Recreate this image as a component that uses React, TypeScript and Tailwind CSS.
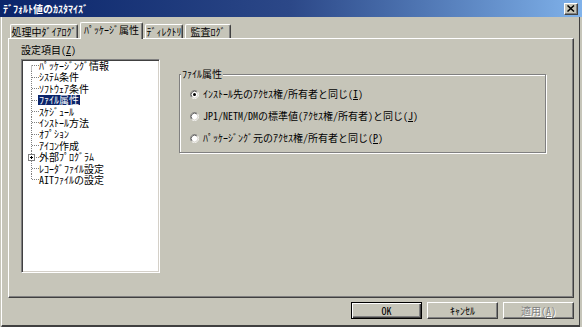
import React from 'react';

const FONT = "font-['Noto_Sans_CJK_JP','Noto_Sans_CJK_SC',sans-serif] [font-feature-settings:'hwid']";

type TreeItem = { label: string; h: number; selected?: boolean; expandable?: boolean };

// rows sit ~11.4px apart, so heights alternate 11 / 12
const treeItems: TreeItem[] = [
  { label: 'ﾊﾟｯｹｰｼﾞﾝｸﾞ情報', h: 11 },
  { label: 'ｼｽﾃﾑ条件', h: 12 },
  { label: 'ｿﾌﾄｳｪｱ条件', h: 11 },
  { label: 'ﾌｧｲﾙ属性', h: 12, selected: true },
  { label: 'ｽｹｼﾞｭｰﾙ', h: 11 },
  { label: 'ｲﾝｽﾄｰﾙ方法', h: 11 },
  { label: 'ｵﾌﾟｼｮﾝ', h: 12 },
  { label: 'ｱｲｺﾝ作成', h: 11 },
  { label: '外部ﾌﾟﾛｸﾞﾗﾑ', h: 12, expandable: true },
  { label: 'ﾚｺｰﾀﾞﾌｧｲﾙ設定', h: 11 },
  { label: 'AITﾌｧｲﾙの設定', h: 11 },
];

const Connector: React.FC<{ h: number; first: boolean; last: boolean; plus?: boolean }> = ({
  h,
  first,
  last,
  plus,
}) => {
  const mid = Math.floor(h / 2) + 0.5;
  return (
    <svg width={16} height={h} viewBox={`0 0 16 ${h}`} className="shrink-0">
      <line x1={8.5} y1={first ? mid : 0} x2={8.5} y2={last ? mid : h} stroke="#808080" strokeDasharray="1 1" />
      <line x1={9} y1={mid} x2={16} y2={mid} stroke="#808080" strokeDasharray="1 1" />
      {plus && (
        <>
          <rect x={5.5} y={mid - 3} width={6} height={6} fill="#fff" stroke="#808080" />
          <line x1={7} y1={mid} x2={10} y2={mid} stroke="#000" />
          <line x1={8.5} y1={mid - 1.5} x2={8.5} y2={mid + 1.5} stroke="#000" />
        </>
      )}
    </svg>
  );
};

const Radio: React.FC<{ checked?: boolean }> = ({ checked }) => (
  <svg width={9} height={9} viewBox="0 0 12 12" className="shrink-0">
    <circle cx={6} cy={6} r={4.5} fill="#fff" />
    <path d="M2.11 9.89 A5.5 5.5 0 0 1 9.89 2.11" fill="none" stroke="#808080" />
    <path d="M9.89 2.11 A5.5 5.5 0 0 1 2.11 9.89" fill="none" stroke="#fff" />
    <path d="M2.82 9.18 A4.5 4.5 0 0 1 9.18 2.82" fill="none" stroke="#404040" />
    <path d="M9.18 2.82 A4.5 4.5 0 0 1 2.82 9.18" fill="none" stroke="#d4d0c8" />
    {checked && <circle cx={6} cy={6} r={2} fill="#000" />}
  </svg>
);

const Tab: React.FC<{ className: string; selected?: boolean; children: React.ReactNode }> = ({
  className,
  selected,
  children,
}) => (
  <div
    className={`${className} ${
      selected ? 'h-[17px] -mb-[1px] relative z-10 pb-[2px]' : 'h-[14px] pt-[1px]'
    } bg-[#c6c5b9] border-l border-t border-r border-white border-r-[#404040] shadow-[inset_-1px_0_0_#808080] rounded-t-[2px] flex items-center justify-center text-[10px] leading-[12px] whitespace-nowrap`}
  >
    {children}
  </div>
);

const RadioRow: React.FC<{ checked?: boolean; children: React.ReactNode }> = ({ checked, children }) => (
  <div className="h-[22px] flex items-center gap-[4px] text-[10px] leading-[12px] whitespace-nowrap">
    <Radio checked={checked} />
    <span>{children}</span>
  </div>
);

const raised =
  'bg-[#c6c5b9] border border-t-white border-l-white border-r-[#404040] border-b-[#404040] shadow-[inset_-1px_-1px_0_#808080]';

export default function App() {
  return (
    <div className={`w-[582px] h-[327px] bg-[#c6c5b9] flex flex-col overflow-hidden text-black ${FONT}`}>
      {/* title bar */}
      <div className="h-[17px] shrink-0 flex items-center pl-[3px] pr-[4px] bg-linear-to-r from-[#0a246a] via-[#2c4888] to-[#80b2ea]">
        <span className="flex-1 text-white text-[10px] leading-[12px] font-semibold">ﾃﾞﾌｫﾙﾄ値のｶｽﾀﾏｲｽﾞ</span>
        <div className={`w-[14px] h-[12px] flex items-center justify-center ${raised}`}>
          <svg width={8} height={7} viewBox="0 0 8 7">
            <path d="M0.5 0.5 L7 6.5 M7 0.5 L0.5 6.5" stroke="#000" strokeWidth={1.5} />
          </svg>
        </div>
      </div>

      {/* window body */}
      <div className="flex-1 ml-[1px] mr-[2px] flex flex-col border-l border-white border-r border-r-[#404040] border-b-2 border-b-[#404040]">
        <div className="h-[21px] shrink-0 flex items-end pl-[8px] gap-[2px]">
          <Tab className="w-[68px]">処理中ﾀﾞｲｱﾛｸﾞ</Tab>
          <Tab className="w-[63px]" selected>
            ﾊﾟｯｹｰｼﾞ属性
          </Tab>
          <Tab className="w-[38px]">ﾃﾞｨﾚｸﾄﾘ</Tab>
          <Tab className="w-[46px]">監査ﾛｸﾞ</Tab>
        </div>

        <div className="ml-[6px] w-[566px] h-[260px] shrink-0 flex border-l border-t border-white border-r border-b border-r-[#404040] border-b-[#404040] shadow-[inset_-1px_-1px_0_#808080]">
          <div className="ml-[12px] flex flex-col">
            <div className="pt-[5px] mb-[3px] text-[10px] leading-[12px]">
              設定項目(<span className="underline underline-offset-1">Z</span>)
            </div>
            <div className="w-[139px] h-[214px] bg-white border border-[#808080] border-b-white border-r-white shadow-[inset_1px_1px_0_#404040,inset_-1px_-1px_0_#d4d0c8] pl-[1px]">
              {treeItems.map((item, i) => (
                <div key={item.label} className="flex items-center" style={{ height: item.h }}>
                  <Connector h={item.h} first={i === 0} last={i === treeItems.length - 1} plus={item.expandable} />
                  <span
                    className={`text-[10px] leading-[10px] whitespace-nowrap ${
                      item.selected ? 'bg-[#0a246a] text-white -ml-[1px] px-[1px]' : ''
                    }`}
                  >
                    {item.label}
                  </span>
                </div>
              ))}
            </div>
          </div>

          <div className="ml-[19px] mt-[35px] w-[367px] h-[79px] relative border border-[#808080] shadow-[1px_1px_0_#fff,inset_1px_1px_0_#fff] pt-[8px] pl-[10px]">
            <span className="absolute left-[1px] -top-[7px] px-[1px] bg-[#c6c5b9] text-[10px] leading-[12px]">ﾌｧｲﾙ属性</span>
            <RadioRow checked>
              ｲﾝｽﾄｰﾙ先のｱｸｾｽ権/所有者と同じ(<span className="underline underline-offset-1">I</span>)
            </RadioRow>
            <RadioRow>
              JP1/NETM/DMの標準値(ｱｸｾｽ権/所有者)と同じ(<span className="underline underline-offset-1">J</span>)
            </RadioRow>
            <RadioRow>
              ﾊﾟｯｹｰｼﾞﾝｸﾞ元のｱｸｾｽ権/所有者と同じ(<span className="underline underline-offset-1">P</span>)
            </RadioRow>
          </div>
        </div>

        <div className="mt-[4px] pr-[5px] flex justify-end gap-[5px]">
          <button className="w-[71px] h-[17px] bg-[#c6c5b9] border border-black shadow-[inset_1px_1px_0_#fff,inset_-1px_-1px_0_#404040,inset_-2px_-2px_0_#808080] flex items-center justify-center text-[10px] leading-none">
            OK
          </button>
          <button className={`w-[71px] h-[17px] flex items-center justify-center text-[10px] leading-none ${raised}`}>
            ｷｬﾝｾﾙ
          </button>
          <button
            disabled
            className={`w-[71px] h-[17px] flex items-center justify-center text-[10px] leading-none text-[#808080] [text-shadow:1px_1px_0_#fff] ${raised}`}
          >
            適用(<span className="underline underline-offset-1">A</span>)
          </button>
        </div>
      </div>
    </div>
  );
}
